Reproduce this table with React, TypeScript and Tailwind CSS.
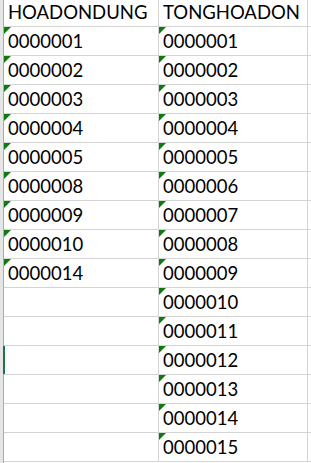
import { FC } from "react";

const leftCol = ["0000001", "0000002", "0000003", "0000004", "0000005", "0000008", "0000009", "0000010", "0000014"];
const rightCol = Array.from({ length: 15 }, (_, i) => String(i + 1).padStart(7, "0"));

const Flag: FC = () => (
  <span className="absolute left-0 top-0 w-[7px] h-[7px] bg-[#0f7a0f] [clip-path:polygon(0_0,100%_0,0_100%)]" />
);

const Cell: FC<{ value?: string; wide?: boolean }> = ({ value, wide }) => (
  <div
    className={`relative h-full border-r border-[#d4d4d4] pl-1 leading-[28px] ${wide ? "w-[155px]" : "w-[149px]"}`}
  >
    {value && <Flag />}
    {value}
  </div>
);

const App: FC = () => {
  return (
    <div className="flex w-[311px] h-[463px] overflow-hidden bg-white text-black font-['Lato',sans-serif] text-[18.5px]">
      <div className="w-[3px] bg-[#e6e6e6]" />
      <div className="flex flex-col flex-1 border-l border-[#ababab]">
        <div className="flex h-[27px] border-b border-[#d4d4d4] leading-[24px]">
          <div className="w-[155px] border-r border-[#d4d4d4] pl-1">HOADONDUNG</div>
          <div className="w-[149px] border-r border-[#d4d4d4] pl-1">TONGHOADON</div>
          <div className="flex-1" />
        </div>
        {rightCol.map((r, i) => (
          <div key={r} className="relative flex h-[29px] border-b border-[#d4d4d4]">
            {i === 11 && <span className="absolute -left-px top-0 w-[2px] h-[28px] bg-[#217346]" />}
            <Cell wide value={leftCol[i]} />
            <Cell value={r} />
            <div className="flex-1" />
          </div>
        ))}
      </div>
    </div>
  );
};

export default App;
